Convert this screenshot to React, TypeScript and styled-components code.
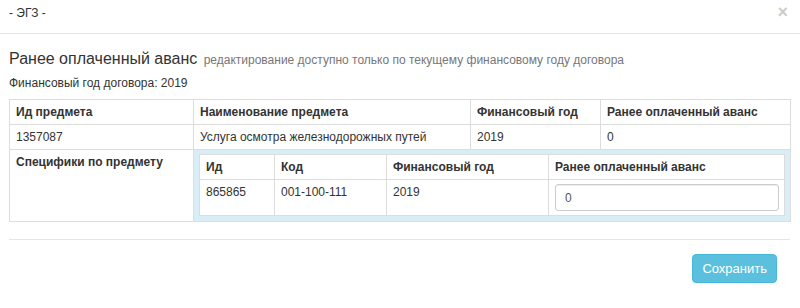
import React from 'react';
import styled, { createGlobalStyle } from 'styled-components';

const GlobalStyle = createGlobalStyle`
  html, body {
    margin: 0;
    padding: 0;
    background: #fff;
  }
  body {
    font-family: "Liberation Sans", Arial, sans-serif;
    font-size: 12px;
    color: #333;
  }
`;

const Modal = styled.div`
  width: 800px;
  height: 308px;
  background: #fff;
`;

const ModalHeader = styled.div`
  height: 34px;
  box-sizing: border-box;
  border-bottom: 1px solid #e5e5e5;
  padding: 0 12px 0 9px;
  display: flex;
  align-items: center;
  justify-content: space-between;
`;

const HeaderTitle = styled.span`
  font-size: 12px;
  line-height: 17px;
  margin-top: -7px;
`;

const CloseButton = styled.button`
  border: 0;
  background: none;
  padding: 0;
  font-family: "Liberation Sans", Arial, sans-serif;
  font-size: 18px;
  font-weight: bold;
  line-height: 1;
  color: #000;
  opacity: 0.2;
  margin-top: -10px;
  cursor: pointer;
`;

const ModalBody = styled.div`
  padding: 15px 10px 0 9px;
`;

const Title = styled.h4`
  margin: 0;
  font-size: 16px;
  font-weight: normal;
  line-height: 20px;
`;

const Hint = styled.small`
  font-size: 12px;
  color: #777;
  margin-left: 3px;
`;

const YearLine = styled.p`
  margin: 5px 0 0;
  line-height: 17px;
`;

const Table = styled.table`
  width: 100%;
  border-collapse: collapse;
  table-layout: fixed;
  margin-top: 7px;
  font-size: 12px;
`;

const InnerTable = styled(Table)`
  margin-top: 0;
  background: #fff;
`;

const Cell = styled.td`
  border: 1px solid #ddd;
  padding: 4px 6px;
  line-height: 16px;
  vertical-align: top;
`;

const HeadCell = styled.th`
  border: 1px solid #ddd;
  padding: 4px 6px;
  line-height: 16px;
  font-weight: bold;
  text-align: left;
  vertical-align: top;
`;

const NestedCell = styled.td`
  border: 1px solid #ddd;
  padding: 0;
  vertical-align: top;
`;

const NestedBox = styled.div`
  background: #d9edf7;
  padding: 4px 6px 5px 5px;
`;

const InputCell = styled(Cell)`
  padding: 4px 5px 4px 6px;
`;

const Input = styled.input`
  display: block;
  width: 100%;
  height: 27px;
  box-sizing: border-box;
  border: 1px solid #ccc;
  border-radius: 3px;
  padding: 4px 9px;
  font-family: "Liberation Sans", Arial, sans-serif;
  font-size: 12px;
  color: #555;
  box-shadow: inset 0 1px 1px rgba(0, 0, 0, 0.075);
`;

const Divider = styled.hr`
  margin: 17px 0 0;
  border: 0;
  border-top: 1px solid #e5e5e5;
`;

const Footer = styled.div`
  display: flex;
  justify-content: flex-end;
  padding: 14px 23px 0 0;
`;

const SaveButton = styled.button`
  background: #5bc0de;
  border: 1px solid #46b8da;
  border-radius: 4px;
  color: #fff;
  font-family: "Liberation Sans", Arial, sans-serif;
  font-size: 13px;
  height: 29px;
  padding: 0 9px;
  cursor: pointer;
`;

const outerCols = [184, 277, 130, 190];
const innerCols = [75, 112, 162, 236];

export default function App() {
  return (
    <>
      <GlobalStyle />
      <Modal>
        <ModalHeader>
          <HeaderTitle>- ЭГЗ -</HeaderTitle>
          <CloseButton>×</CloseButton>
        </ModalHeader>
        <ModalBody>
          <Title>
            Ранее оплаченный аванс
            <Hint> редактирование доступно только по текущему финансовому году договора</Hint>
          </Title>
          <YearLine>Финансовый год договора: 2019</YearLine>
          <Table>
            <colgroup>
              {outerCols.map((w, i) => (
                <col key={i} style={{ width: w }} />
              ))}
            </colgroup>
            <tbody>
              <tr>
                <HeadCell>Ид предмета</HeadCell>
                <HeadCell>Наименование предмета</HeadCell>
                <HeadCell>Финансовый год</HeadCell>
                <HeadCell>Ранее оплаченный аванс</HeadCell>
              </tr>
              <tr>
                <Cell>1357087</Cell>
                <Cell>Услуга осмотра железнодорожных путей</Cell>
                <Cell>2019</Cell>
                <Cell>0</Cell>
              </tr>
              <tr>
                <HeadCell>Специфики по предмету</HeadCell>
                <NestedCell colSpan={3}>
                  <NestedBox>
                    <InnerTable>
                      <colgroup>
                        {innerCols.map((w, i) => (
                          <col key={i} style={{ width: w }} />
                        ))}
                      </colgroup>
                      <tbody>
                        <tr>
                          <HeadCell>Ид</HeadCell>
                          <HeadCell>Код</HeadCell>
                          <HeadCell>Финансовый год</HeadCell>
                          <HeadCell>Ранее оплаченный аванс</HeadCell>
                        </tr>
                        <tr>
                          <Cell>865865</Cell>
                          <Cell>001-100-111</Cell>
                          <Cell>2019</Cell>
                          <InputCell>
                            <Input defaultValue="0" />
                          </InputCell>
                        </tr>
                      </tbody>
                    </InnerTable>
                  </NestedBox>
                </NestedCell>
              </tr>
            </tbody>
          </Table>
          <Divider />
        </ModalBody>
        <Footer>
          <SaveButton>Сохранить</SaveButton>
        </Footer>
      </Modal>
    </>
  );
}
